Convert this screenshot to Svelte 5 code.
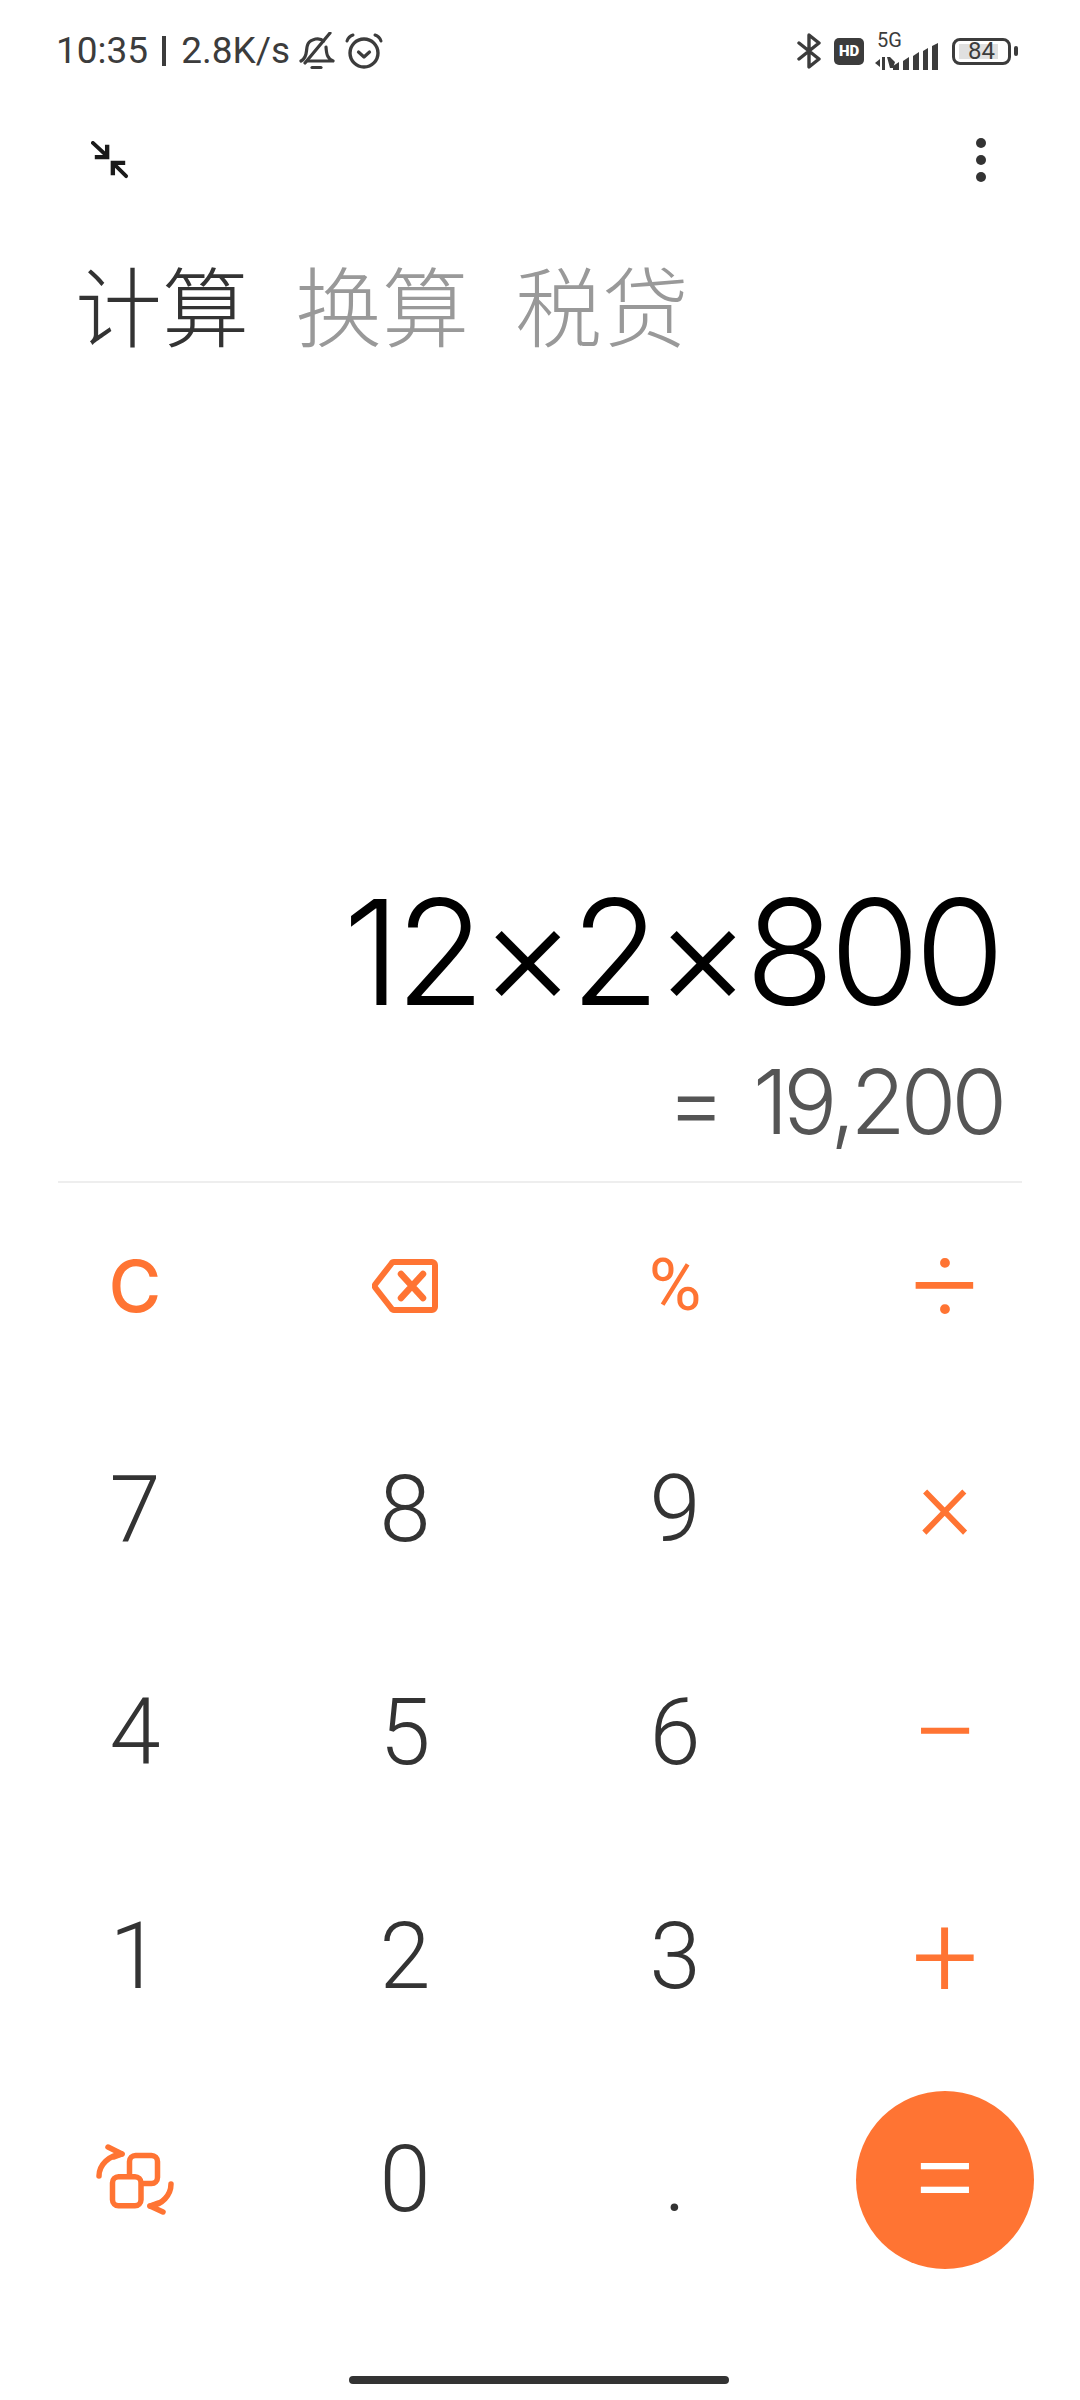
<script>
  const rows = [
    [{t:'C',op:1,k:'tc'},{icon:'back'},{t:'%',op:1,k:'tp'},{t:'÷',op:1,k:'o'}],
    [{t:'7'},{t:'8'},{t:'9'},{t:'×',op:1,k:'o x'}],
    [{t:'4'},{t:'5'},{t:'6'},{t:'−',op:1,k:'o'}],
    [{t:'1'},{t:'2'},{t:'3'},{t:'+',op:1,k:'o'}],
    [{icon:'swap'},{t:'0'},{t:'.'},{eq:1}]
  ];
</script>

<div class="page">
  <header class="status">
    <div class="left">
      <span class="time">10:35</span>
      <span class="sep"></span>
      <span class="speed">2.8K/s</span>
      <svg class="bell" viewBox="0 0 36 38" width="36" height="38" fill="none" stroke="#3c3c3c" stroke-width="3.2" stroke-linecap="round" stroke-linejoin="round">
        <path d="M2 29c4-2 5-5 5.500-10 .5-6 1-10 9-12 3-.5 6 0 8 2"/>
        <path d="M27 15c.5 7 1 11 7 14H9"/>
        <path d="M31 1 6 31"/>
        <path d="M13 35.500h9"/>
      </svg>
      <svg class="alarm" viewBox="0 0 38 38" width="38" height="38" fill="none" stroke="#3c3c3c" stroke-linecap="round" stroke-linejoin="round">
        <circle cx="19" cy="21" r="14" stroke-width="3.4"/>
        <path d="M13.500 20l5.500 5 5.500-5" stroke-width="3.200"/>
        <path d="M2 9c1-3 3-5 6-6M36 9c-1-3-3-5-6-6" stroke-width="3"/>
      </svg>
    </div>
    <div class="right">
      <svg class="bt" viewBox="0 0 24 36" width="24" height="36" fill="none" stroke="#3c3c3c" stroke-width="3.400" stroke-linejoin="round" stroke-linecap="round">
        <path d="M2 10l20 16-10 8V2l10 8L2 26"/>
      </svg>
      <span class="hd">HD</span>
      <div class="net">
        <span class="fiveg">5G</span>
        <svg viewBox="0 0 64 30" width="64" height="30">
          <path d="M1 20l5-4v8zM8 14h3v13H8zM13 14h3l5 5-2 6h-3z" fill="#3c3c3c"/>
          <path d="M19 27v-4l6-4v8zM29 27v-9l6-4v13zM39 27V13l6-4v18zM49 27V8l5-3v22zM58 27V3l6-3v27z" fill="#3c3c3c"/>
        </svg>
      </div>
      <div class="battery">
        <div class="cell"><span class="fill"></span><span class="num">84</span></div>
        <span class="nub"></span>
      </div>
    </div>
  </header>

  <div class="tools">
    <svg viewBox="0 0 40 40" width="38" height="38" fill="none" stroke="#1a1a1a" stroke-width="4">
      <path d="M2 2l14 13" stroke-linecap="round"/>
      <path d="M17 4v13H4" stroke-width="4.600"/>
      <path d="M37 37L24 24" stroke-linecap="round"/>
      <path d="M23 36V23h13" stroke-width="4.600"/>
    </svg>
    <div class="dots"><i></i><i></i><i></i></div>
  </div>

  <nav class="tabs">
    <span class="active">计算</span>
    <span>换算</span>
    <span>税贷</span>
  </nav>

  <div class="spacer"></div>

  <div class="expr">12×2×800</div>
  <div class="result">= 19,200</div>
  <div class="divider"></div>

  <div class="keys">
    {#each rows as row}
      {#each row as key}
        <div class="key">
          {#if key.eq}
            <div class="equals"><span>=</span></div>
          {:else if key.icon === 'back'}
            <svg viewBox="0 0 66 54" width="66" height="54" fill="none" stroke="#ff7433" stroke-width="6" stroke-linejoin="round" stroke-linecap="round">
              <path d="M22 3h38c1.500 0 3 1.500 3 3v42c0 1.500-1.500 3-3 3H22c-1 0-2-.5-2.500-1.500L3.500 29c-1-1.300-1-2.700 0-4L19.500 4.500C20 3.500 21 3 22 3z"/>
              <path d="M29 15l22 24M51 15L29 39" stroke-width="6.500"/>
            </svg>
          {:else if key.icon === 'swap'}
            <svg viewBox="0 0 80 75" width="80" height="75" fill="none" stroke="#ff7433" stroke-width="5.500" stroke-linejoin="round" stroke-linecap="round">
              <rect x="34.500" y="12.500" width="28" height="28" rx="6"/>
              <rect x="17.500" y="33.700" width="28.500" height="29" rx="6" fill="#fff"/>
              <path d="M4 33c0-11 10-21 23-22"/>
              <path d="M13 4l14 7-8 3"/>
              <path d="M76 41c0 11-9 21-21 22"/>
              <path d="M68 69l-13-6 8-3"/>
            </svg>
          {:else}
            <span class={key.op ? 'op ' + key.k : 'digit'}>{key.t}</span>
          {/if}
        </div>
      {/each}
    {/each}
  </div>

  <div class="homebar"></div>
</div>

<style>
  :global(body) { margin: 0; background: #fff; }
  .page {
    width: 1080px; height: 2400px; display: flex; flex-direction: column;
    background: #fff; overflow: hidden; position: relative;
    font-family: Roboto, "Noto Sans CJK SC", sans-serif;
  }
  .status {
    height: 100px; box-sizing: border-box; padding: 28px 62px 0 56px;
    display: flex; justify-content: space-between; align-items: flex-start;
    color: #3c3c3c;
  }
  .left { display: flex; align-items: center; height: 46px; }
  .time, .speed { font-size: 37px; line-height: 46px; letter-spacing: 0; }
  .sep { width: 4px; height: 30px; background: #3c3c3c; margin: 0 15px 0 14px; }
  .bell { margin-left: 9px; }
  .alarm { margin-left: 10px; }
  .right { display: flex; align-items: center; height: 46px; }
  .bt { margin-right: 13px; }
  .hd {
    width: 30px; height: 27px; border-radius: 5px; background: #3c3c3c; color: #fff;
    font-size: 15px; font-weight: 900; line-height: 27px; text-align: center;
    margin-right: 10px;
  }
  .net { position: relative; width: 64px; height: 46px; margin-right: 14px; }
  .net svg { position: absolute; left: 0; bottom: 1px; }
  .fiveg { position: absolute; left: 3px; top: 0; font-size: 20px; line-height: 24px; }
  .battery { display: flex; align-items: center; }
  .cell {
    position: relative; width: 59px; height: 27px; box-sizing: border-box;
    border: 3px solid #3c3c3c; border-radius: 8px;
    display: flex; align-items: center; justify-content: center;
  }
  .fill { position: absolute; left: 4px; top: 3px; bottom: 3px; width: 39px; background: #e0e0e0; }
  .num { position: relative; font-size: 24px; line-height: 27px; }
  .nub { width: 4px; height: 10px; background: #3c3c3c; border-radius: 2px; margin-left: 3px; }

  .tools {
    height: 60px; margin-top: 30px; padding: 0 94px 0 91px;
    display: flex; justify-content: space-between; align-items: center;
  }
  .dots { display: flex; flex-direction: column; gap: 7px; }
  .dots i { width: 10px; height: 10px; border-radius: 50%; background: #333; display: block; }

  .tabs {
    margin-top: 53px; padding-left: 75px; display: flex; gap: 46px;
    font-size: 87px; line-height: 120px; font-weight: 300; color: #999;
    font-family: "Noto Sans CJK SC", sans-serif;
  }
  .tabs .active { color: #333; }

  .spacer { flex: 1; }
  .expr {
    text-align: right; padding-right: 80px; color: #000;
    font-family: Inter, Roboto, sans-serif;
    font-size: 146px; line-height: 170px; font-weight: 340; letter-spacing: -5px;
  }
  .result {
    text-align: right; padding-right: 78px; color: #555;
    font-family: Inter, Roboto, sans-serif;
    font-size: 90px; line-height: 110px; font-weight: 340; margin-top: 10px;
    letter-spacing: -5px; word-spacing: 12px;
  }
  .divider { height: 2px; background: #eeeeee; margin: 24px 58px -8px; }

  .keys {
    display: grid; grid-template-columns: repeat(4, 270px); grid-auto-rows: 223.500px;
    padding-bottom: 108px;
  }
  .key { display: flex; align-items: center; justify-content: center; }
  .digit { font-size: 92px; line-height: 1; font-weight: 300; color: #333; }
  .op { color: #ff7433; line-height: 1; }
  .tc { font-family: Inter, Roboto, sans-serif; font-size: 72px; font-weight: 500; }
  .tp { font-size: 72px; font-weight: 400; }
  .o { font-size: 118px; font-weight: 350; }
  .o.x { font-size: 105px; margin-bottom: 10px; }
  .equals {
    width: 178px; height: 178px; border-radius: 50%; background: #ff7433; color: #fff;
    display: flex; align-items: center; justify-content: center;
    font-size: 118px; line-height: 1; font-weight: 350;
  }
  .equals span { margin-bottom: 6px; }
  .homebar {
    position: absolute; left: 349px; top: 2376px; width: 380px; height: 8px;
    border-radius: 4px; background: #333;
  }
</style>
